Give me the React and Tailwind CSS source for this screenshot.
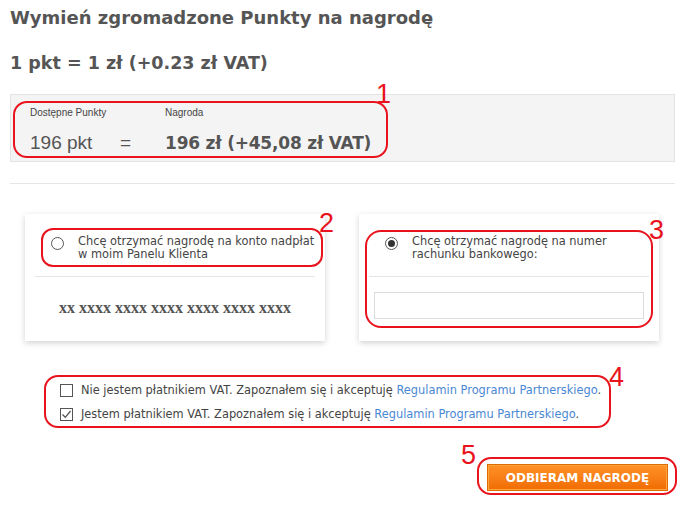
import React from 'react';

const verdana = { fontFamily: '"DejaVu Sans", Verdana, sans-serif' };
const arial = { fontFamily: '"Liberation Sans", Arial, sans-serif' };

function Radio({ checked }) {
  return (
    <span className="mt-[2px] flex h-[13px] w-[13px] shrink-0 items-center justify-center rounded-full border border-[#555] bg-white">
      {checked && <span className="h-[7px] w-[7px] rounded-full bg-[#333]" />}
    </span>
  );
}

function Checkbox({ checked }) {
  return (
    <span className="flex h-[13px] w-[13px] shrink-0 items-center justify-center border border-[#555] bg-white">
      {checked && (
        <svg width="11" height="11" viewBox="0 0 11 11" fill="none">
          <path d="M1.5 5.5 L4.3 8.3 L9.5 2" stroke="#555" strokeWidth="1.3" />
        </svg>
      )}
    </span>
  );
}

function Note({ n, className, numClass }) {
  return (
    <>
      <div className={`pointer-events-none absolute border-2 border-[#e8131c] ${className}`} />
      <div className={`pointer-events-none absolute text-[27px] leading-[28px] text-[#e8131c] ${numClass}`} style={arial}>
        {n}
      </div>
    </>
  );
}

export default function App() {
  return (
    <div className="relative min-h-[505px] w-[686px] bg-white pl-[10px] pr-[11px] text-[#555]" style={verdana}>
      {/* Header */}
      <h1 className="pt-[8px] text-[18px] font-bold leading-[20px]">Wymień zgromadzone Punkty na nagrodę</h1>
      <h2 className="mt-[25px] text-[17.5px] font-bold leading-[20px]">1 pkt = 1 zł (+0.23 zł VAT)</h2>

      {/* Summary box */}
      <div className="mt-[21px] flex h-[68px] border border-[#e3e3e3] bg-[#f4f4f4] pl-[19px]">
        <div className="w-[135px] pt-[11px]" style={arial}>
          <div className="text-[10px] leading-[13px] text-[#444]">Dostępne Punkty</div>
          <div className="mt-[13px] flex text-[19px] leading-[22px] text-[#555]">
            <span className="w-[90px]">196 pkt</span>
            <span>=</span>
          </div>
        </div>
        <div className="pt-[11px]">
          <div className="text-[10px] leading-[13px] text-[#444]" style={arial}>Nagroda</div>
          <div className="mt-[13px] text-[17px] font-bold leading-[22px] tracking-[-0.2px] text-[#555]">
            196 zł (+45,08 zł VAT)
          </div>
        </div>
      </div>

      <div className="mt-[21px] h-px bg-[#e5e5e5]" />

      {/* Cards */}
      <div className="mt-[30px] flex justify-center gap-[34px] pr-px">
        <div className="h-[127px] w-[300px] bg-white px-[10px] pt-[21px] shadow-[0_2px_6px_rgba(0,0,0,0.18)]">
          <div className="-mr-[4px] flex gap-[14px] pl-[16px] text-[11.4px] leading-[13px] text-[#444]">
            <Radio />
            <span>Chcę otrzymać nagrodę na konto nadpłat w moim Panelu Klienta</span>
          </div>
          <div className="mt-[15px] h-px bg-[#e5e5e5]" />
          <div
            className="mt-[21px] text-center text-[16px] font-bold leading-[20px] text-[#555]"
            style={{ fontFamily: '"Liberation Serif", "Times New Roman", serif' }}
          >
            xx xxxx xxxx xxxx xxxx xxxx xxxx
          </div>
        </div>
        <div className="h-[127px] w-[300px] bg-white px-[10px] pt-[21px] shadow-[0_2px_6px_rgba(0,0,0,0.18)]">
          <div className="flex gap-[14px] pl-[16px] text-[11.4px] leading-[13px] text-[#444]">
            <Radio checked />
            <span>Chcę otrzymać nagrodę na numer rachunku bankowego:</span>
          </div>
          <div className="mt-[15px] h-px bg-[#e5e5e5]" />
          <div className="mx-[5px] mt-[15px] h-[27px] border border-[#dcdcdc] bg-white" />
        </div>
      </div>

      {/* Checkboxes */}
      <div className="mt-[43px] flex flex-col gap-[11px] pl-[50px] text-[11.4px] leading-[13px] text-[#444]">
        <label className="flex items-center gap-[8px]">
          <Checkbox />
          <span>
            Nie jestem płatnikiem VAT. Zapoznałem się i akceptuję{' '}
            <span className="text-[#4a88d4]">Regulamin Programu Partnerskiego</span>.
          </span>
        </label>
        <label className="flex items-center gap-[8px]">
          <Checkbox checked />
          <span>
            Jestem płatnikiem VAT. Zapoznałem się i akceptuję{' '}
            <span className="text-[#4a88d4]">Regulamin Programu Partnerskiego</span>.
          </span>
        </label>
      </div>

      {/* Button */}
      <div className="mt-[43px] flex justify-end pr-[7px]">
        <button className="h-[27px] w-[181px] border border-[#e46a00] bg-gradient-to-b from-[#ff9126] to-[#f06c00] text-[12px] font-bold text-white shadow-[inset_0_0_0_1px_#ffa640]">
          ODBIERAM NAGRODĘ
        </button>
      </div>

      {/* Annotations */}
      <Note n="1" className="left-[13px] top-[101px] h-[57px] w-[375px] rounded-[14px]" numClass="left-[376px] top-[80px]" />
      <Note n="2" className="left-[41px] top-[228px] h-[39px] w-[282px] rounded-[12px]" numClass="left-[319px] top-[209px]" />
      <Note n="3" className="left-[365px] top-[230px] h-[98px] w-[288px] rounded-[16px]" numClass="left-[649px] top-[216px]" />
      <Note n="4" className="left-[44px] top-[375px] h-[53px] w-[567px] rounded-[14px]" numClass="left-[609px] top-[363px]" />
      <Note n="5" className="left-[477px] top-[457px] h-[38px] w-[200px] rounded-[14px]" numClass="left-[461px] top-[441px]" />
    </div>
  );
}
